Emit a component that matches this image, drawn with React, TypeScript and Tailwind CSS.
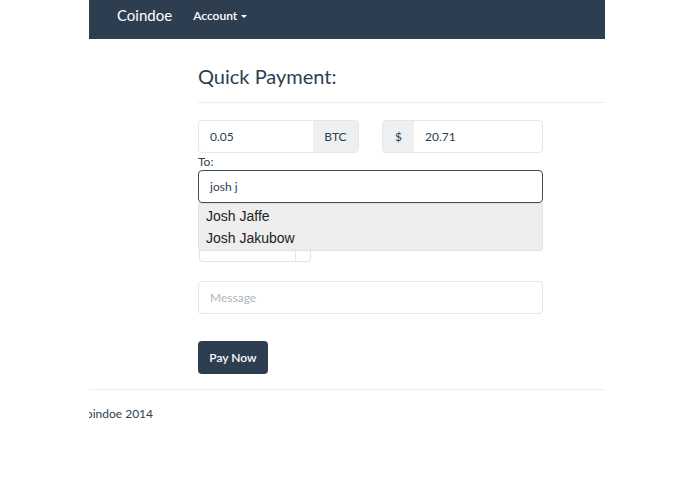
const font = "font-['Lato','Open_Sans',sans-serif]";

const App = () => {
  return (
    <div className={`min-h-[494px] w-full bg-white ${font}`}>
      <div className="ml-[89px] w-[516px] overflow-hidden">
        {/* Navbar */}
        <nav className="flex h-[39px] items-center bg-[#2c3e50] pb-[8px] pl-[28px] text-white">
          <span className="text-[15px] leading-none">Coindoe</span>
          <span className="ml-[21px] flex items-center gap-[4px] text-[12px] font-semibold leading-none">
            Account
            <span className="mt-[1px] h-0 w-0 border-x-[3px] border-t-[3px] border-x-transparent border-t-white" />
          </span>
        </nav>

        {/* Content */}
        <div className="pl-[109px]">
          <h2 className="mt-[25px] text-[20px] leading-[24px] text-[#2c3e50]">Quick Payment:</h2>
          <div className="mt-[14px] border-t border-[#eeeeee]" />

          <div className="mt-[17px] w-[345px] text-[12px] text-[#2c3e50]">
            {/* Amount row */}
            <div className="flex items-center justify-between">
              <div className="flex h-[33px] w-[161px] rounded-[4px] border border-[#e6e6e6]">
                <div className="flex flex-1 items-center pl-[11px]">0.05</div>
                <div className="flex w-[45px] items-center justify-center rounded-r-[4px] bg-[#ecf0f1]">BTC</div>
              </div>
              <div className="flex h-[33px] w-[161px] rounded-[4px] border border-[#e6e6e6]">
                <div className="flex w-[31px] items-center justify-center rounded-l-[4px] bg-[#ecf0f1]">$</div>
                <div className="flex flex-1 items-center pl-[11px]">20.71</div>
              </div>
            </div>

            <div className="mt-[1px] text-[12px] leading-[16px]">To:</div>

            {/* Recipient with autocomplete */}
            <div className="relative">
              <div className="flex h-[33px] items-center rounded-[4px] border border-[#3e4d5c] pl-[11px] text-[12px] text-[#2c3e50]">
                josh j
              </div>
              <div className="ml-[1px] mt-[26px] flex h-[33px] w-[112px] rounded-b-[4px] border border-[#e3e3e3]">
                <div className="flex-1 border-r border-[#e3e3e3]" />
                <div className="w-[14px]" />
              </div>
              <div className="absolute left-0 top-[33px] w-[345px] rounded-b-[3px] border border-[#e2e2e2] bg-[#eeeeee] py-[1px] font-['Liberation_Sans',sans-serif] text-[14px] text-[#222]">
                <div className="h-[22px] pl-[7px] leading-[22px]">Josh Jaffe</div>
                <div className="h-[22px] pl-[7px] leading-[22px]">Josh Jakubow</div>
              </div>
            </div>

            {/* Message */}
            <div className="mt-[19px] flex h-[33px] items-center rounded-[4px] border border-[#e6e6e6] pl-[11px] text-[#acb6c0]">
              Message
            </div>

            <button className="mt-[27px] h-[33px] w-[70px] rounded-[4px] bg-[#2c3e50] text-[12px] font-semibold text-white">
              Pay Now
            </button>
          </div>
        </div>

        {/* Footer */}
        <div className="mt-[15px] border-t border-[#eeeeee]" />
        <div className="ml-[-21px] mt-[15px] text-[12px] text-[#2c3e50]">©Coindoe 2014</div>
      </div>
    </div>
  );
};

export default App;
